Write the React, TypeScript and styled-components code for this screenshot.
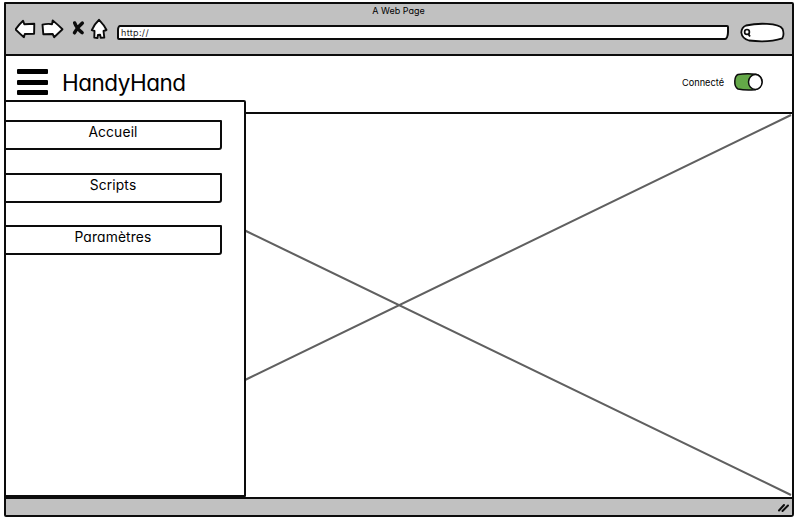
import React from "react";
import styled, { createGlobalStyle } from "styled-components";

const INK = "#0c0c0c";

const GlobalStyle = createGlobalStyle`
  * { box-sizing: border-box; }
  body {
    margin: 0;
    background: #fff;
    color: #000;
    font-family: Inter, "Liberation Sans", sans-serif;
    font-feature-settings: "cv11" 1;
  }
`;

const Page = styled.div`
  width: 797px;
  height: 518px;
  padding: 2px 3px 1px 4px;
  overflow: hidden;
`;

const BrowserWindow = styled.div`
  height: 515px;
  display: flex;
  flex-direction: column;
  border: 2px solid ${INK};
  border-radius: 1px 2px 3px 2px;
`;

const Chrome = styled.header`
  flex: 0 0 52px;
  background: #c1c1c1;
  border-bottom: 2px solid ${INK};
  display: flex;
  flex-direction: column;
`;

const WindowTitle = styled.div`
  height: 15px;
  padding-right: 1px;
  text-align: center;
  font-size: 9px;
  line-height: 14px;
`;

const Toolbar = styled.div`
  flex: 1;
  display: flex;
  align-items: flex-start;
  padding-left: 9px;
`;

const NavIcons = styled.svg`
  flex: none;
  width: 94px;
  height: 24px;
  margin-top: -1px;
`;

const AddressBar = styled.div`
  width: 612px;
  height: 15px;
  margin: 6px 0 0 8px;
  padding-left: 2px;
  background: #fff;
  border: 2px solid ${INK};
  border-radius: 3px 2px 4px 2px / 5px 2px 8px 2px;
  font-size: 9px;
  line-height: 11px;
  color: #222;
  letter-spacing: 0.35px;
`;

const SearchBox = styled.svg`
  flex: none;
  width: 46px;
  height: 22px;
  margin: 3px 0 0 11px;
`;

const AppBar = styled.div`
  flex: 0 0 56px;
  display: flex;
  align-items: center;
  padding: 0 29px 4px 11px;
`;

const MenuIcon = styled.div`
  width: 31px;
  height: 26px;
  display: flex;
  flex-direction: column;
  justify-content: space-between;
`;

const MenuBar = styled.span`
  height: 5px;
  border-radius: 1px;
  background: #000;
`;

const AppName = styled.h1`
  margin: 1px auto 0 14px;
  font-size: 22.5px;
  line-height: 30px;
  font-weight: 400;
  letter-spacing: -0.5px;
`;

const Status = styled.span`
  margin: 1px 9px 0 0;
  font-size: 9.2px;
`;

const Toggle = styled.svg`
  width: 30px;
  height: 20px;
`;

const Main = styled.main`
  flex: 1;
  min-height: 0;
  display: flex;
`;

const Sidebar = styled.nav`
  position: relative;
  flex: 0 0 242px;
  margin: -12px 0 0 -2px;
  padding: 18px 22px 0 0;
  background: #fff;
  border: 2px solid ${INK};
  border-radius: 1px 2px 1px 1px;
  display: flex;
  flex-direction: column;
  gap: 22.5px;
`;

const MenuItem = styled.button`
  height: 30px;
  margin-left: -2px;
  padding: 0 0 5px;
  background: #fff;
  border: 2px solid ${INK};
  border-radius: 2px 1px 3px 1px;
  font: inherit;
  font-feature-settings: "cv11" 1;
  font-size: 13.8px;
  line-height: 19px;
  letter-spacing: 0.15px;
  color: #000;
`;

const Content = styled.section`
  flex: 1;
  border-top: 2px solid ${INK};
`;

const Cross = styled.svg`
  display: block;
  width: 100%;
  height: 100%;
`;

const Footer = styled.footer`
  flex: 0 0 18px;
  background: #c1c1c1;
  border-top: 2px solid ${INK};
  display: flex;
  justify-content: flex-end;
  padding: 3px 3px 0 0;
`;

const Grip = styled.svg`
  width: 12px;
  height: 12px;
`;

const menu = ["Accueil", "Scripts", "Paramètres"];

export default function App() {
  return (
    <>
      <GlobalStyle />
      <Page>
        <BrowserWindow>
          <Chrome>
            <WindowTitle>A Web Page</WindowTitle>
            <Toolbar>
              <NavIcons
                viewBox="14.7 17.8 94 24"
                fill="#fff"
                stroke={INK}
                strokeWidth="1.9"
                strokeLinejoin="round"
                strokeLinecap="round"
              >
                <path d="M15.2 29.2 Q19 24 22.8 20.6 L24 24 L34 23.6 L33.8 33.6 L24.5 33.8 L23.6 37 Q19 33 15.2 29.2Z" />
                <path d="M42.2 24.5 Q47 23.2 51.8 24 L52.4 20.2 Q58 25 62.2 29 L53.8 37 L52.4 33.8 L43 34 Z" />
                <path d="M74.4 22.8 Q76.5 28.5 81.8 32.4 M82 23 Q77 27 74.2 32.6" fill="none" strokeWidth="3.5" />
                <path d="M98.8 19.6 Q104 25 106.2 29.8 L103.2 30.8 L104 37.4 L100.4 37.6 L99.8 34.6 L97.6 34.8 L97.2 37.8 L94 37.4 L94.2 30.8 L91.5 30 Q94 24 98.8 19.6Z" />
              </NavIcons>
              <AddressBar>http://</AddressBar>
              <SearchBox viewBox="740 21.5 46 22" fill="#fff" stroke={INK} strokeWidth="1.8">
                <path d="M746 25 Q756 22.8 767 23.4 Q780 24 782.6 28.5 Q784.5 34 782.3 37.8 Q768 42.4 749 40 Q742 38 741.3 32 Q741.5 27 746 25Z" />
                <circle cx="747" cy="31.4" r="2.4" strokeWidth="1.7" />
                <path d="M748.3 33.4 L750 36" />
              </SearchBox>
            </Toolbar>
          </Chrome>
          <AppBar>
            <MenuIcon>
              <MenuBar />
              <MenuBar />
              <MenuBar />
            </MenuIcon>
            <AppName>HandyHand</AppName>
            <Status>Connecté</Status>
            <Toggle viewBox="733 72 30 20" stroke={INK} strokeWidth="1.5">
              <path
                d="M738 74.5 Q746 73.3 756 74.2 Q762 76 762 82 Q761 89 755 89.7 Q745 90.5 738 89 Q734.5 87 734.8 81 Q735 76 738 74.5Z"
                fill="#64a848"
              />
              <ellipse cx="755.3" cy="82" rx="6.8" ry="7.4" fill="#fff" />
            </Toggle>
          </AppBar>
          <Main>
            <Sidebar>
              {menu.map((label) => (
                <MenuItem key={label}>{label}</MenuItem>
              ))}
            </Sidebar>
            <Content>
              <Cross viewBox="246 114 546 383" preserveAspectRatio="none" stroke="#606060" strokeWidth="2.1">
                <path d="M245 230.5 L791 495 M245 380 L791 115" fill="none" />
              </Cross>
            </Content>
          </Main>
          <Footer>
            <Grip viewBox="777 502 12 12" stroke={INK} strokeWidth="2" strokeLinecap="round">
              <path d="M779 510.5 L784 505 M782.5 511 L788 505.5" />
            </Grip>
          </Footer>
        </BrowserWindow>
      </Page>
    </>
  );
}
